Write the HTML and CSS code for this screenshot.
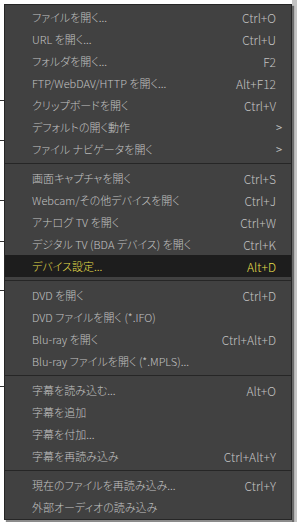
FILE: index.html
```html
<!DOCTYPE html>
<html lang="ja">
<head>
  <meta charset="UTF-8" />
  <meta name="viewport" content="width=device-width, initial-scale=1.0"/>
  <title>開くメニュー</title>
  <link rel="stylesheet" href="styles.css">
</head>
<body>
  <!-- window behind the menu, only its edges show -->
  <div class="behind">
    <i class="mark" style="top:100px"></i>
    <i class="mark" style="top:140px"></i>
    <i class="mark" style="top:200px"></i>
    <i class="mark" style="top:241px"></i>
    <i class="mark" style="top:290px"></i>
    <i class="mark" style="top:386px"></i>
  </div>

  <div class="menu">
    <div class="item"><span class="label">ファイルを開く...</span><span class="key">Ctrl+O</span></div>
    <div class="item"><span class="label">URL を開く...</span><span class="key">Ctrl+U</span></div>
    <div class="item"><span class="label">フォルダを開く...</span><span class="key">F2</span></div>
    <div class="item"><span class="label">FTP/WebDAV/HTTP を開く...</span><span class="key">Alt+F12</span></div>
    <div class="item"><span class="label">クリップボードを開く</span><span class="key">Ctrl+V</span></div>
    <div class="item"><span class="label">デフォルトの開く動作</span><span class="arrow">&gt;</span></div>
    <div class="item"><span class="label">ファイル ナビゲータを開く</span><span class="arrow">&gt;</span></div>
    <div class="sep"></div>
    <div class="item"><span class="label">画面キャプチャを開く</span><span class="key">Ctrl+S</span></div>
    <div class="item"><span class="label">Webcam/その他デバイスを開く</span><span class="key">Ctrl+J</span></div>
    <div class="item"><span class="label">アナログ TV を開く</span><span class="key">Ctrl+W</span></div>
    <div class="item"><span class="label">デジタル TV (BDA デバイス) を開く</span><span class="key">Ctrl+K</span></div>
    <div class="item active"><span class="label">デバイス設定...</span><span class="key">Alt+D</span></div>
    <div class="sep"></div>
    <div class="item"><span class="label">DVD を開く</span><span class="key">Ctrl+D</span></div>
    <div class="item"><span class="label">DVD ファイルを開く (*.IFO)</span></div>
    <div class="item"><span class="label">Blu-ray を開く</span><span class="key">Ctrl+Alt+D</span></div>
    <div class="item"><span class="label">Blu-ray ファイルを開く (*.MPLS)...</span></div>
    <div class="sep"></div>
    <div class="item"><span class="label">字幕を読み込む...</span><span class="key">Alt+O</span></div>
    <div class="item"><span class="label">字幕を追加</span></div>
    <div class="item"><span class="label">字幕を付加...</span></div>
    <div class="item"><span class="label">字幕を再読み込み</span><span class="key">Ctrl+Alt+Y</span></div>
    <div class="sep"></div>
    <div class="item"><span class="label">現在のファイルを再読み込み...</span><span class="key">Ctrl+Y</span></div>
    <div class="item"><span class="label">外部オーディオの読み込み</span></div>
  </div>
</body>
</html>
```

FILE: styles.css
```css
* {
  margin: 0;
  padding: 0;
  box-sizing: border-box;
}
body {
  width: 297px;
  height: 522px;
  overflow: hidden;
  position: relative;
  background: #ffffff;
  font-family: "Noto Sans CJK JP", "Noto Sans", sans-serif;
  font-size: 12px;
}
.behind {
  position: absolute;
  top: 0;
  left: 0;
  width: 297px;
  height: 522px;
}
.behind::after {
  content: "";
  position: absolute;
  top: 0;
  right: 0;
  width: 5px;
  height: 100%;
  background: #c4c4c4;
}
.mark {
  position: absolute;
  left: 0;
  width: 4px;
  height: 1px;
  background: #333;
}
.menu {
  position: relative;
  margin: 4px 0 0 4px;
  width: 288px;
  padding: 1px 0;
  background: #414141;
  border: 1px solid #262626;
  box-shadow: 2px 2px 1px rgba(0, 0, 0, 0.45);
}
.item {
  display: flex;
  align-items: center;
  height: 22px;
  padding: 0 15px 0 27px;
  color: #c2c2c2;
  white-space: nowrap;
}
.label {
  flex: 1;
  font-size: 11px;
  font-weight: 300;
  font-feature-settings: "palt";
}
.key {
  text-align: right;
  font-weight: 300;
}
.arrow {
  margin-right: -6px;
  font-size: 11px;
}
.item.active {
  background: #1d1d1d;
  color: #e4dd4b;
}
.sep {
  height: 1px;
  margin: 3px 0;
  background: #262626;
}
```
